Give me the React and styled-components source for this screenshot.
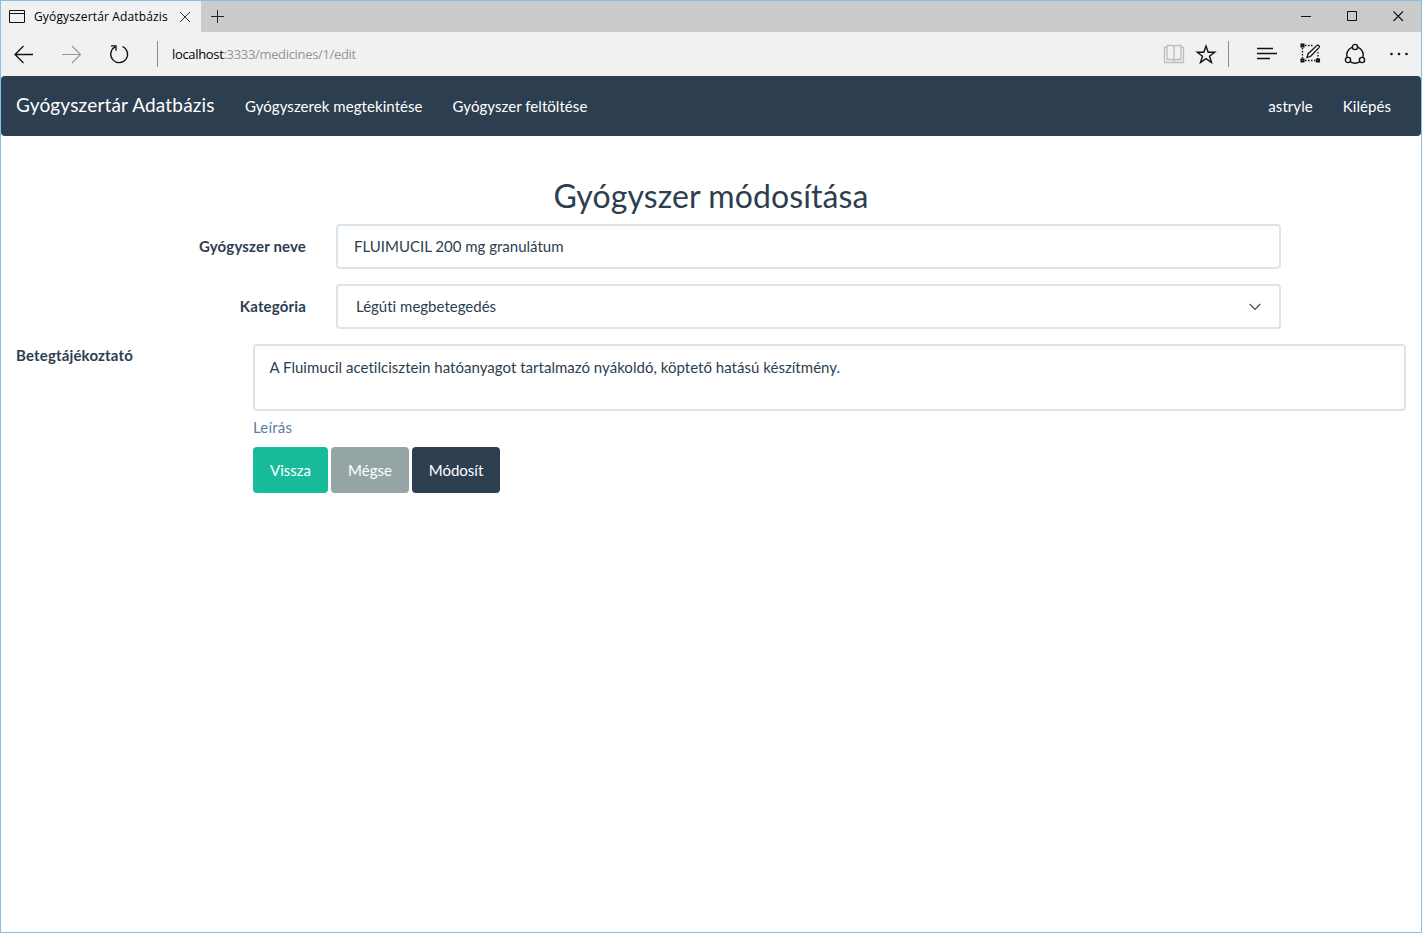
import React from 'react';
import styled, { createGlobalStyle } from 'styled-components';

const GlobalStyle = createGlobalStyle`
  *, *::before, *::after { box-sizing: border-box; }
  body {
    margin: 0;
    background: #fff;
    font-family: Lato, "Liberation Sans", sans-serif;
    font-size: 15px;
    line-height: 21px;
    font-variant-ligatures: none;
    color: #2c3e50;
  }
`;

const Window = styled.div`
  display: flex;
  flex-direction: column;
  width: 100%;
  height: 933px;
  border: 1px solid #87bfe0;
  overflow: hidden;
`;

const chromeFont = `font-family: "Open Sans", "Noto Sans", sans-serif; font-size: 12px; white-space: nowrap;`;

const TitleBar = styled.div`
  display: flex;
  height: 31px;
  background: #cbcbcb;
`;

const Tab = styled.div`
  display: flex;
  align-items: center;
  width: 200px;
  padding-left: 8px;
  background: #f1f1f1;
`;

const TabTitle = styled.span`
  ${chromeFont}
  width: 135px;
  margin: 0 10px 0 9px;
  letter-spacing: 0.14px;
  color: #000;
`;

const NewTab = styled.div`
  display: flex;
  align-items: center;
  padding-left: 10px;
  flex: 1;
`;

const WindowControl = styled.div`
  display: flex;
  align-items: center;
  justify-content: center;
  width: 46px;
`;

const Toolbar = styled.div`
  display: flex;
  align-items: center;
  flex: none;
  height: 44px;
  padding: 0 10px 0 12px;
  background: #f1f1f1;
`;

const Tool = styled.div`
  display: flex;
  width: 22px;
  height: 22px;
  margin-left: ${(p) => p.$gap || 0}px;
`;

const Divider = styled.div`
  width: 1px;
  height: 26px;
  margin-left: ${(p) => p.$gap}px;
  background: #8c8c8c;
`;

const Address = styled.div`
  ${chromeFont}
  flex: 1;
  margin-left: 14px;
  font-size: 13px;
  letter-spacing: ${(p) => p.$tracking}px;
  color: #949494;
`;

const Host = styled.span`
  color: #000;
`;

const Navbar = styled.nav`
  display: flex;
  align-items: center;
  flex: none;
  height: 60px;
  padding: 0 15px;
  border-radius: 4px;
  background: #2c3e50;
  box-shadow: 0 -4px 0 #f1f1f1;
  color: #fff;
`;

const Brand = styled.a`
  width: 199px;
  margin-right: 15px;
  padding-bottom: 3px;
  font-size: 19px;
  letter-spacing: 0.18px;
  white-space: nowrap;
`;

const NavLink = styled.a`
  padding: 0 15px;
  letter-spacing: 0.06px;
  white-space: nowrap;
  margin-left: ${(p) => (p.$right ? 'auto' : '0')};
`;

const Heading = styled.h2`
  margin: 42px 0 10px;
  font-size: 32px;
  line-height: 36px;
  font-weight: 400;
  letter-spacing: 0.1px;
  text-align: center;
`;

const Form = styled.form`
  display: flex;
  flex-direction: column;
`;

const NarrowRow = styled.div`
  display: grid;
  grid-template-columns: 305px 945px;
  column-gap: 30px;
  align-items: center;
  margin-bottom: 15px;
`;

const WideRow = styled.div`
  display: grid;
  grid-template-columns: 237px 1fr;
  padding: 0 15px;
`;

const Label = styled.label`
  padding-top: ${(p) => (p.$align ? 1 : 0)}px;
  font-weight: 700;
  letter-spacing: 0.16px;
  text-align: ${(p) => p.$align || 'right'};
`;

const Field = styled.div`
  display: flex;
  align-items: center;
  justify-content: space-between;
  height: 45px;
  padding: 0 18px 0 ${(p) => p.$inset || 16}px;
  border: 2px solid #dce4ec;
  border-radius: 4px;
`;

const TextArea = styled.div`
  height: 67px;
  padding: 11px 14.5px;
  border: 2px solid #dce4ec;
  border-radius: 4px;
  letter-spacing: 0.025px;
`;

const Help = styled.span`
  display: block;
  margin: 6px 0 9px;
  letter-spacing: 0.2px;
  color: #597ea2;
`;

const Buttons = styled.div`
  display: flex;
  gap: 3px;
`;

const Button = styled.button`
  width: ${(p) => p.$width}px;
  height: 46px;
  padding: 0;
  border: 0;
  border-radius: 4px;
  background: ${(p) => p.$color};
  color: #fff;
  font: inherit;
`;

const Icon = ({ w = 22, h = 22, color = '#111', width = 1.2, children }) => (
  <svg width={w} height={h} viewBox={`0 0 ${w} ${h}`} fill="none" stroke={color} strokeWidth={width}>
    {children}
  </svg>
);

export default function App() {
  return (
    <>
      <GlobalStyle />
      <Window>
        <TitleBar>
          <Tab>
            <Icon w={16} h={13} width={1}>
              <path d="M.5 .5h15v12H.5zM.5 3.5h15" />
            </Icon>
            <TabTitle>Gyógyszertár Adatbázis</TabTitle>
            <Icon w={12} h={12} width={1} color="#333">
              <path d="M1 1l10 10M11 1L1 11" />
            </Icon>
          </Tab>
          <NewTab>
            <Icon w={13} h={13} width={1} color="#222">
              <path d="M6.5 0v13M0 6.5h13" />
            </Icon>
          </NewTab>
          <WindowControl>
            <Icon w={11} h={11} width={1}><path d="M0 5.5h10" /></Icon>
          </WindowControl>
          <WindowControl>
            <Icon w={11} h={11} width={1}><path d="M.5 .5h9v9h-9z" /></Icon>
          </WindowControl>
          <WindowControl>
            <Icon w={11} h={11} width={1.1}><path d="M.5 .5l9.500 9.500M10 .5L.5 10" /></Icon>
          </WindowControl>
        </TitleBar>

        <Toolbar>
          <Tool>
            <Icon width={1.3}><path d="M20 11.500H2M10.500 3L2 11.500l8.500 8.500" /></Icon>
          </Tool>
          <Tool $gap={26}>
            <Icon width={1.2} color="#999"><path d="M1 11.500h18M11 3l8.500 8.500L11 20" /></Icon>
          </Tool>
          <Tool $gap={26}>
            <Icon width={1.3}>
              <path d="M6 3.900A8.400 8.400 0 1 0 13.500 3.500M2 2.800H7V7.800" />
            </Icon>
          </Tool>
          <Divider $gap={26} />
          <Address $tracking={-0.33}><Host>localhost</Host>:3333/medicines/1/edit</Address>
          <Tool>
            <Icon color="#bdbdbd" width={1.3}>
              <path d="M4 4.500H1.500v15h19v-15H18M11 4v14M4 2.500h5q2 0 2 2q0-2 2-2h5v14h-5q-2 0-2 2q0-2-2-2H4z" />
            </Icon>
          </Tool>
          <Tool $gap={10}>
            <Icon width={1.4}>
              <path d="M11 3l2.200 6.200h6.500l-5.200 4 2 6.300L11 15.600l-5.500 3.900 2-6.300-5.200-4h6.500z" />
            </Icon>
          </Tool>
          <Divider $gap={11} />
          <Tool $gap={27}>
            <Icon width={1.4}><path d="M1 5.500h16M1 10.500h20M1 15.500h13" /></Icon>
          </Tool>
          <Tool $gap={22}>
            <Icon width={1.3}>
              <path d="M5 2.500h8M2.500 5v12M5 17.500h12M18 9v8" strokeDasharray="1.500 1.500" />
              <path d="M1.300 1.300h2.400v2.400H1.300zM1.300 16.300h2.400v2.400H1.300zM16.800 16.300h2.400v2.400h-2.400z" strokeWidth="1.700" />
              <path d="M7 14.500l1.200-3.800 8.800-8.300q1.200-.7 2 .2t0 2l-8.300 8.700z" />
            </Icon>
          </Tool>
          <Tool $gap={22}>
            <Icon width={1.4}>
              <circle cx="11" cy="12" r="8.300" />
              <g fill="#f1f1f1">
                <circle cx="11" cy="4" r="2.600" />
                <circle cx="4" cy="17" r="2.600" />
                <circle cx="18" cy="17" r="2.600" />
              </g>
            </Icon>
          </Tool>
          <Tool $gap={23}>
            <Icon>
              <g fill="#111" stroke="none">
                <circle cx="2.500" cy="11" r="1.300" /><circle cx="10" cy="11" r="1.300" /><circle cx="17.500" cy="11" r="1.300" />
              </g>
            </Icon>
          </Tool>
        </Toolbar>

        <Navbar>
          <Brand>Gyógyszertár Adatbázis</Brand>
          <NavLink>Gyógyszerek megtekintése</NavLink>
          <NavLink>Gyógyszer feltöltése</NavLink>
          <NavLink $right>astryle</NavLink>
          <NavLink>Kilépés</NavLink>
        </Navbar>

        <Heading>Gyógyszer módosítása</Heading>
        <Form>
          <NarrowRow>
            <Label>Gyógyszer neve</Label>
            <Field>FLUIMUCIL 200 mg granulátum</Field>
          </NarrowRow>
          <NarrowRow>
            <Label>Kategória</Label>
            <Field $inset={18}>
              Légúti megbetegedés
              <Icon w={12} h={8} width={1.1} color="#444"><path d="M.7 1L6 6.500 11.300 1" /></Icon>
            </Field>
          </NarrowRow>
          <WideRow>
            <Label $align="left">Betegtájékoztató</Label>
            <div>
              <TextArea>A Fluimucil acetilcisztein hatóanyagot tartalmazó nyákoldó, köptető hatású készítmény.</TextArea>
              <Help>Leírás</Help>
              <Buttons>
                <Button type="button" $width={75} $color="#18bc9c">Vissza</Button>
                <Button type="button" $width={78} $color="#95a5a6">Mégse</Button>
                <Button type="button" $width={88} $color="#2c3e50">Módosít</Button>
              </Buttons>
            </div>
          </WideRow>
        </Form>
      </Window>
    </>
  );
}
